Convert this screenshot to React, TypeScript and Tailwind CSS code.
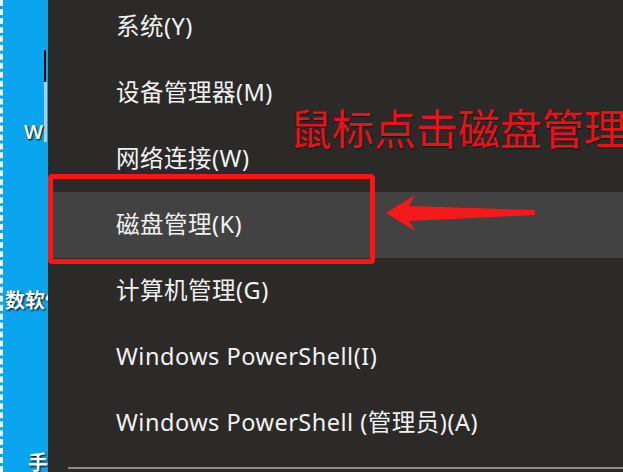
const ITEMS = [
  "系统(Y)",
  "设备管理器(M)",
  "网络连接(W)",
  "磁盘管理(K)",
  "计算机管理(G)",
  "Windows PowerShell(I)",
  "Windows PowerShell (管理员)(A)",
];

const FONT = "font-['Noto_Sans','Noto_Sans_CJK_SC',sans-serif]";

export default function App() {
  return (
    <div className={`relative w-[623px] h-[472px] overflow-hidden flex ${FONT}`}>
      {/* Desktop strip behind the menu */}
      <div className="relative w-[48px] shrink-0 bg-[#0ba4ee] overflow-hidden">
        <div className="absolute left-0 top-0 bottom-0 w-[3px] border-l-[3px] border-dashed border-white/90" />
        <div className="absolute left-[44px] top-[50px] w-[2px] h-[32px] bg-black" />
        <div className="absolute left-[44px] top-[82px] w-[3px] h-[60px] bg-[#e9e4dc]/70" />
        <span className="absolute left-[24px] top-[117px] text-[20px] text-white font-semibold [text-shadow:1px_1px_2px_#000]">
          W
        </span>
        <span className="absolute left-[5px] top-[285px] text-[20px] text-white font-bold font-['Noto_Sans_CJK_SC',sans-serif] [text-shadow:1px_1px_2px_#000] whitespace-nowrap">
          数软件
        </span>
        <span className="absolute left-[28px] top-[452px] text-[20px] leading-none text-white font-bold font-['Noto_Sans_CJK_SC',sans-serif] [text-shadow:1px_1px_2px_#000]">
          手
        </span>
      </div>

      {/* Context menu */}
      <div className="flex-1 bg-[#2b2a29] flex flex-col">
        <div className="flex flex-col -mt-[6px]">
          {ITEMS.map((label, i) => (
            <div
              key={label}
              className={`h-[66px] flex items-center pl-[68px] text-[23.5px] tracking-[0.5px] text-[#f2f2f2] whitespace-nowrap ${
                i === 3 ? "bg-[#424242]" : ""
              }`}
            >
              {label}
            </div>
          ))}
        </div>
        <div className="ml-[20px] mt-[11px] h-[2px] bg-[#8c8c8c]" />
      </div>

      {/* Annotation: red box, label and arrow */}
      <div className="absolute left-[48px] top-[174px] w-[327px] h-[90px] border-[5px] border-[#ff1414] rounded-[4px]" />
      <span className="absolute left-[290px] top-[106px] text-[42px] leading-none text-[#e8121a] whitespace-nowrap font-['Noto_Sans_CJK_SC',sans-serif] [text-shadow:1px_1px_1px_#111]">
        鼠标点击磁盘管理
      </span>
      <svg className="absolute left-0 top-0" width="623" height="472" viewBox="0 0 623 472">
        <polygon
          points="386,213 415,195 409,206 535,210 535,215 409,221 415,231"
          fill="#f51a1a"
        />
      </svg>
    </div>
  );
}
